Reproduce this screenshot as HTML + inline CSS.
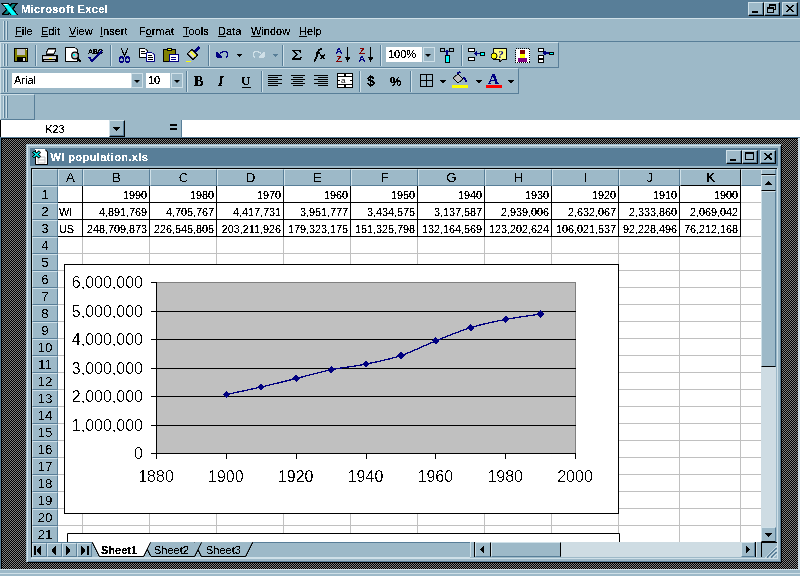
<!DOCTYPE html>
<html><head><meta charset="utf-8">
<style>
*{margin:0;padding:0;box-sizing:border-box}
html,body{width:800px;height:576px;overflow:hidden;background:#9db9c8;font-family:"Liberation Sans",sans-serif;font-size:11px;color:#000;line-height:1}
.a{position:absolute}
.hl{background:#cfe0e8}
.sh{background:#587e98}
.tb{position:absolute;border-top:1px solid #cfe0e8;border-left:1px solid #cfe0e8;border-right:1px solid #587e98;border-bottom:1px solid #587e98}
.grip{position:absolute;width:2px;border-left:1px solid #cfe0e8;border-right:1px solid #587e98}
.sep{position:absolute;width:2px;border-left:1px solid #587e98;border-right:1px solid #cfe0e8}
.btn{position:absolute;background:#9db9c8;border-top:1px solid #cfe0e8;border-left:1px solid #cfe0e8;border-right:1px solid #000;border-bottom:1px solid #000;box-shadow:inset -1px -1px 0 #587e98}
.menu{position:absolute;top:26px;font-size:11px}
.menu u{text-decoration:underline;text-underline-offset:1px}
.ttl{position:absolute;color:#fff;font-weight:bold;font-size:11px;letter-spacing:0.4px}
.hdr{position:absolute;background:#9db9c8;border-top:1px solid #cfe0e8;border-left:1px solid #cfe0e8;border-right:1px solid #587e98;border-bottom:1px solid #587e98;text-align:center;font-size:13.33px;line-height:15px}
.cell{position:absolute;font-size:10.8px;text-align:right;line-height:16px}
.ax{position:absolute;font-size:16px;line-height:1}
.th{filter:url(#t1)}
.th2{filter:url(#t2)}
.th3{filter:url(#t3)}
.ht{position:absolute;text-align:center;font-size:13.33px;line-height:15px}
</style></head><body>
<svg width="0" height="0" style="position:absolute"><filter id="t1"><feComponentTransfer><feFuncA type="discrete" tableValues="0 0 1 1 1"/></feComponentTransfer></filter><filter id="t3"><feComponentTransfer><feFuncA type="discrete" tableValues="0 1"/></feComponentTransfer></filter><filter id="t2"><feComponentTransfer><feFuncA type="discrete" tableValues="0 0 0 1 1"/></feComponentTransfer></filter></svg>
<!-- app title bar -->
<div class="a" style="left:0;top:0;width:800px;height:18px;background:#587e98"></div>
<div class="ttl th" style="left:21px;top:4px">Microsoft Excel</div>
<div class="btn" style="left:748px;top:2px;width:16px;height:14px"></div>
<div class="btn" style="left:764px;top:2px;width:16px;height:14px"></div>
<div class="btn" style="left:782px;top:2px;width:16px;height:14px"></div>
<div class="a hl" style="left:0;top:18px;width:800px;height:1px"></div>
<!-- menu bar -->
<div class="grip" style="left:3px;top:21px;height:19px"></div>
<div class="grip" style="left:6px;top:21px;height:19px"></div>
<div class="menu th" style="left:15px"><u>F</u>ile</div>
<div class="menu th" style="left:41px"><u>E</u>dit</div>
<div class="menu th" style="left:69px"><u>V</u>iew</div>
<div class="menu th" style="left:100px"><u>I</u>nsert</div>
<div class="menu th" style="left:139px">F<u>o</u>rmat</div>
<div class="menu th" style="left:183px"><u>T</u>ools</div>
<div class="menu th" style="left:218px"><u>D</u>ata</div>
<div class="menu th" style="left:251px"><u>W</u>indow</div>
<div class="menu th" style="left:299px"><u>H</u>elp</div>
<div class="a sh" style="left:0;top:41px;width:800px;height:1px"></div>
<!-- toolbars -->
<div class="tb" style="left:0;top:42px;width:559px;height:26px"></div>
<div class="grip" style="left:3px;top:44px;height:22px"></div>
<div class="grip" style="left:6px;top:44px;height:22px"></div>
<div class="tb" style="left:0;top:68px;width:519px;height:26px"></div>
<div class="grip" style="left:3px;top:70px;height:22px"></div>
<div class="grip" style="left:6px;top:70px;height:22px"></div>
<div class="tb" style="left:0;top:94px;width:35px;height:26px"></div>
<div class="grip" style="left:3px;top:96px;height:22px"></div>
<div class="grip" style="left:6px;top:96px;height:22px"></div>
<!-- formula bar -->
<div class="a" style="left:0;top:120px;width:109px;height:17px;background:#fff;border-left:1px solid #000"></div>
<div class="a th" style="left:45.5px;top:124px;font-size:10.67px">K23</div>
<div class="btn" style="left:109px;top:120px;width:16px;height:17px"></div>
<div class="a" style="left:170px;top:124px;width:7px;height:2px;background:#000"></div>
<div class="a" style="left:170px;top:128px;width:7px;height:2px;background:#000"></div>
<div class="a" style="left:181px;top:120px;width:619px;height:17px;background:#fff;border-left:1px solid #587e98"></div>
<div class="a sh" style="left:0;top:137px;width:800px;height:1px"></div>
<!-- MDI -->
<svg class="a" style="left:1px;top:138px" width="797" height="431"><defs><pattern id="chk" x="0" y="0" width="2" height="2" patternUnits="userSpaceOnUse"><rect width="2" height="2" fill="#000"/><rect x="1" y="0" width="1" height="1" fill="#808080"/><rect x="0" y="1" width="1" height="1" fill="#808080"/></pattern></defs><rect width="797" height="431" fill="url(#chk)" shape-rendering="crispEdges"/></svg>
<div class="a sh" style="left:0;top:138px;width:1px;height:431px"></div>
<div class="a" style="left:1px;top:138px;width:797px;height:1px;background:#000"></div>
<div class="a" style="left:1px;top:138px;width:1px;height:431px;background:#000"></div>
<div class="a hl" style="left:798px;top:138px;width:2px;height:431px"></div>
<!-- status bar area -->
<div class="a" style="left:0;top:569px;width:800px;height:7px;background:#9db9c8;border-top:1px solid #cfe0e8"></div>
<div class="a hl" style="left:0;top:573px;width:800px;height:1px"></div>
<!-- document window -->
<div class="a" style="left:26px;top:144px;width:756px;height:419px;background:#9db9c8;border-top:1px solid #9db9c8;border-left:1px solid #9db9c8;border-right:1px solid #000;border-bottom:1px solid #000;box-shadow:inset 1px 1px 0 #cfe0e8,inset -1px -1px 0 #587e98"></div>
<div class="a" style="left:30px;top:148px;width:748px;height:18px;background:#587e98"></div>
<div class="ttl th" style="left:50.5px;top:152px">WI population.xls</div>
<div class="btn" style="left:726px;top:150px;width:16px;height:14px"></div>
<div class="btn" style="left:742px;top:150px;width:16px;height:14px"></div>
<div class="btn" style="left:760px;top:150px;width:16px;height:14px"></div>

<svg class="a th" style="left:0;top:0" width="800" height="140" shape-rendering="crispEdges">
<!-- app icon -->
<g shape-rendering="auto">
<path d="M2.5 3.5 H8 L17 14.5 H11.5 Z" fill="#00ffff" stroke="#000" stroke-width="1.6"/>
<path d="M12 3.5 H17 L8 14.5 H2.5 Z" fill="#008080" stroke="#000" stroke-width="1.2"/>
<path d="M3 4 H8 L17 15 H11.5 Z" fill="#00ffff"/>
<path d="M3.5 4.5 H7.5" stroke="#fff" stroke-width="1"/>
</g>
<!-- title buttons glyphs -->
<rect x="752" y="11" width="6" height="2" fill="#000"/>
<rect x="769.5" y="4.5" width="6" height="5" fill="none" stroke="#000" stroke-width="1"/>
<rect x="769" y="4" width="7" height="2" fill="#000"/>
<rect x="767" y="7" width="7" height="6" fill="#9db9c8"/>
<rect x="767.5" y="7.5" width="6" height="5" fill="none" stroke="#000"/>
<rect x="767" y="7" width="7" height="2" fill="#000"/>
<path d="M786 5 L794 12 M794 5 L786 12" stroke="#000" stroke-width="1.6" shape-rendering="auto"/>
<!-- save -->
<rect x="14" y="48" width="14" height="14" fill="#000"/>
<rect x="15" y="49" width="12" height="12" fill="#808000"/>
<rect x="17" y="49" width="8" height="6" fill="#c0c0c0"/>
<rect x="16" y="55" width="10" height="0" fill="#808000"/>
<rect x="17" y="57" width="9" height="5" fill="#000"/>
<rect x="23" y="58" width="2" height="3" fill="#e0e0e0"/>
<rect x="26" y="49" width="1" height="1" fill="#fff"/>
<!-- sep -->
<rect x="35" y="45" width="1" height="21" fill="#587e98"/><rect x="36" y="45" width="1" height="21" fill="#cfe0e8"/>
<!-- print -->
<path d="M48 49 H56 L54 54 H46 Z" fill="#fff" stroke="#000" shape-rendering="auto"/>
<rect x="42" y="55" width="16" height="7" fill="#000"/>
<rect x="43" y="56" width="13" height="1" fill="#c0c0c0"/>
<rect x="43" y="57" width="13" height="2" fill="#d8d8d8"/>
<rect x="49" y="58" width="3" height="1" fill="#ffff00"/>
<rect x="44" y="60" width="11" height="1" fill="#c0c0c0"/>
<!-- preview -->
<path d="M65.5 47.5 H75 L77.5 50 V61.5 H65.5 Z" fill="#fff" stroke="#000" shape-rendering="auto"/>
<circle cx="75" cy="55.5" r="3.3" fill="#c0c0c0" stroke="#000" stroke-width="1.2" shape-rendering="auto"/>
<rect x="73" y="54" width="2" height="2" fill="#00ffff"/>
<path d="M77 58 L80.5 61.5" stroke="#000" stroke-width="2" shape-rendering="auto"/>
<!-- spelling -->
<text x="88" y="54" font-family="Liberation Sans" font-size="7" font-weight="bold" shape-rendering="auto">ABC</text>
<path d="M89 57 L92 61 L102 51" fill="none" stroke="#000080" stroke-width="2" shape-rendering="auto"/>
<!-- sep -->
<rect x="110" y="45" width="1" height="21" fill="#587e98"/><rect x="111" y="45" width="1" height="21" fill="#cfe0e8"/>
<!-- cut -->
<g shape-rendering="auto">
<path d="M121 48 L125 57 M128 48 L124 57" stroke="#000" stroke-width="1"/>
<ellipse cx="121.5" cy="59.5" rx="2" ry="2.5" fill="none" stroke="#000080" stroke-width="1.3"/>
<ellipse cx="127.5" cy="59.5" rx="2" ry="2.5" fill="none" stroke="#000080" stroke-width="1.3"/>
</g>
<!-- copy -->
<path d="M139.5 48.5 H145 L147.5 51 V57.5 H139.5 Z" fill="#fff" stroke="#000" shape-rendering="auto"/>
<rect x="141" y="51" width="4" height="1" fill="#000"/><rect x="141" y="53" width="5" height="1" fill="#000"/>
<path d="M146.5 52.5 H152 L154.5 55 V61.5 H146.5 Z" fill="#fff" stroke="#000080" shape-rendering="auto"/>
<rect x="148" y="55" width="4" height="1" fill="#000"/><rect x="148" y="57" width="5" height="1" fill="#000"/><rect x="148" y="59" width="5" height="1" fill="#000"/>
<!-- paste -->
<rect x="163" y="49" width="13" height="13" fill="#000"/>
<rect x="164" y="50" width="11" height="11" fill="#808000"/>
<rect x="167" y="48" width="5" height="3" fill="#000"/><rect x="168" y="49" width="3" height="1" fill="#ffff00"/>
<rect x="169" y="54" width="10" height="8" fill="#000080"/>
<rect x="170" y="55" width="8" height="6" fill="#fff"/>
<rect x="171" y="57" width="5" height="1" fill="#000080"/><rect x="171" y="59" width="5" height="1" fill="#000080"/>
<!-- format painter -->
<g shape-rendering="auto">
<path d="M186.5 53.5 L192 49 L198 55 L193 60 Z" fill="#000"/>
<path d="M188 53.5 L192 50.5 L196.5 55 L193 58.5 Z" fill="#d8d8d8"/>
<path d="M190.5 51.5 L195.5 56.5" stroke="#ffff00" stroke-width="1.4"/>
<path d="M195 51 L199.5 47" stroke="#000080" stroke-width="2.6"/>
<path d="M186 61.5 H191 L192 60.5" stroke="#ffff00" stroke-width="1" fill="none"/>
</g>
<!-- sep -->
<rect x="208" y="45" width="1" height="21" fill="#587e98"/><rect x="209" y="45" width="1" height="21" fill="#cfe0e8"/>
<!-- undo -->
<g shape-rendering="auto">
<path d="M220 53.5 Q223.5 50.5 226 51.5 Q229 53 226.5 57.5" fill="none" stroke="#000080" stroke-width="1.2"/>
<path d="M216.5 51.5 V57.5 H222.5 Z" fill="#000080"/>
<path d="M237 54 H242 L239.5 57 Z" fill="#000"/>
<path d="M261 53.5 Q257.5 50.5 255 51.5 Q252 53 254.5 57.5" fill="none" stroke="#cfe0e8" stroke-width="1.2"/>
<path d="M264.5 51.5 V57.5 H258.5 Z" fill="#cfe0e8"/>
<path d="M273 54 H278 L275.5 57 Z" fill="#587e98"/>
</g>
<!-- sep -->
<rect x="282" y="45" width="1" height="21" fill="#587e98"/><rect x="283" y="45" width="1" height="21" fill="#cfe0e8"/>
<!-- sigma -->
<path d="M292 50 H301 V52.5 H300.2 L299.2 51.2 H294.6 L297.8 54.6 L294.2 58.2 H299.6 L300.6 56.8 H301.4 V59.6 H292 V58.6 L296.2 54.6 L292 50.6 Z" fill="#000" shape-rendering="auto"/>
<!-- fx -->
<path d="M314 61 Q316 60 317 55 L318.5 50.5 Q319.5 48.8 322 49.2" fill="none" stroke="#000" stroke-width="1.6" shape-rendering="auto"/>
<path d="M315.5 53 H320" stroke="#000" stroke-width="1.2" shape-rendering="auto"/>
<path d="M320 54.5 L325 59 M325 54.5 L320 59" stroke="#000" stroke-width="1.4" shape-rendering="auto"/>
<!-- sort asc -->
<text x="335.5" y="53.8" font-family="Liberation Sans" font-size="9.5" font-weight="bold" fill="#000080" shape-rendering="auto">A</text>
<text x="336" y="62" font-family="Liberation Sans" font-size="9.5" font-weight="bold" fill="#800000" shape-rendering="auto">Z</text>
<rect x="347" y="47" width="1" height="12" fill="#000"/><path d="M345 57 H350.2 L347.6 62 Z" fill="#000" shape-rendering="auto"/>
<!-- sort desc -->
<text x="359" y="53.8" font-family="Liberation Sans" font-size="9.5" font-weight="bold" fill="#800000" shape-rendering="auto">Z</text>
<text x="358.5" y="62" font-family="Liberation Sans" font-size="9.5" font-weight="bold" fill="#000080" shape-rendering="auto">A</text>
<rect x="370" y="47" width="1" height="12" fill="#000"/><path d="M368 57 H373.2 L370.6 62 Z" fill="#000" shape-rendering="auto"/>
<!-- sep -->
<rect x="380" y="45" width="1" height="21" fill="#587e98"/><rect x="381" y="45" width="1" height="21" fill="#cfe0e8"/>
<!-- zoom box -->
<rect x="386" y="47" width="36" height="15" fill="#fff"/>
<rect x="423" y="47" width="12" height="15" fill="#cfe0e8"/>
<rect x="424" y="48" width="10" height="13" fill="#9db9c8"/>
<path d="M425 54 H431 L428 57 Z" fill="#000" shape-rendering="auto"/>
<!-- drawing -->
<rect x="440" y="48" width="4" height="3" fill="none" stroke="#000" stroke-width="1"/>
<rect x="449" y="48" width="4" height="3" fill="none" stroke="#000" stroke-width="1"/>
<rect x="445" y="55" width="4" height="7" fill="#00ffff" stroke="#000"/>
<path d="M447 50 V55 M445 52 L447 50 L449 52" stroke="#000080" stroke-width="1.2" fill="none" shape-rendering="auto"/>
<!-- sep -->
<rect x="461" y="45" width="1" height="21" fill="#587e98"/><rect x="462" y="45" width="1" height="21" fill="#cfe0e8"/>
<!-- icon 1 -->
<rect x="468" y="48" width="6" height="3" fill="#fff" stroke="#000"/>
<rect x="468" y="57" width="6" height="3" fill="#fff" stroke="#000"/>
<rect x="480" y="52" width="4" height="3" fill="#00ffff" stroke="#000"/>
<path d="M475 53.5 H480 M477 51.5 L475 53.5 L477 55.5" stroke="#000080" stroke-width="1.3" fill="none" shape-rendering="auto"/>
<!-- help -->
<path d="M493.5 48.5 H506.5 V59.5 H502 L500 62 V59.5 H494 Z" fill="#fff" stroke="#000" shape-rendering="auto"/>
<rect x="494" y="49" width="12" height="10" fill="#ffff80"/>
<text x="498" y="58" font-family="Liberation Serif" font-size="11" font-weight="bold" font-style="italic" fill="#000080" shape-rendering="auto">?</text>
<circle cx="494" cy="56" r="3" fill="#ffff00" stroke="#000" shape-rendering="auto"/>
<!-- assistant -->
<rect x="515.5" y="48.5" width="14" height="14" fill="#fff" stroke="#000" stroke-dasharray="1 1"/>
<rect x="520" y="50" width="5" height="4" fill="#800000"/>
<rect x="520" y="54" width="5" height="4" fill="#ffff00"/>
<rect x="518" y="58" width="9" height="4" fill="#800080"/>
<!-- icon 4 -->
<rect x="538" y="48" width="5" height="3" fill="#fff" stroke="#000"/>
<rect x="538" y="55" width="5" height="3" fill="#fff" stroke="#000"/>
<rect x="538" y="59" width="5" height="3" fill="#fff" stroke="#000"/>
<rect x="549" y="52" width="4" height="2" fill="#00ffff" stroke="#000"/>
<path d="M544 53 H549 M546 51 L544 53 L546 55" stroke="#000080" stroke-width="1.3" fill="none" shape-rendering="auto"/>

<!-- ===== formatting toolbar ===== -->
<rect x="12" y="73" width="119" height="15" fill="#fff"/>
<rect x="131" y="73" width="12" height="15" fill="#cfe0e8"/>
<rect x="132" y="74" width="10" height="13" fill="#9db9c8"/>
<path d="M134 80 H140 L137 83 Z" fill="#000" shape-rendering="auto"/>
<rect x="146" y="73" width="24" height="15" fill="#fff"/>
<rect x="171" y="73" width="12" height="15" fill="#cfe0e8"/>
<rect x="172" y="74" width="10" height="13" fill="#9db9c8"/>
<path d="M174 80 H180 L177 83 Z" fill="#000" shape-rendering="auto"/>
<rect x="186" y="71" width="1" height="21" fill="#587e98"/><rect x="187" y="71" width="1" height="21" fill="#cfe0e8"/>
<text x="194" y="86" font-family="Liberation Serif" font-size="14" font-weight="bold" shape-rendering="auto">B</text>
<text x="218" y="86" font-family="Liberation Serif" font-size="14" font-weight="bold" font-style="italic" shape-rendering="auto">I</text>
<text x="241" y="85" font-family="Liberation Serif" font-size="13" font-weight="bold" shape-rendering="auto">U</text>
<rect x="242" y="87" width="9" height="1" fill="#000"/>
<rect x="261" y="71" width="1" height="21" fill="#587e98"/><rect x="262" y="71" width="1" height="21" fill="#cfe0e8"/>
<!-- align -->
<rect x="268" y="75" width="14" height="1" fill="#000"/><rect x="268" y="77" width="10" height="1" fill="#000"/><rect x="268" y="79" width="14" height="1" fill="#000"/><rect x="268" y="81" width="10" height="1" fill="#000"/><rect x="268" y="83" width="14" height="1" fill="#000"/><rect x="268" y="85" width="10" height="1" fill="#000"/>
<rect x="291" y="75" width="14" height="1" fill="#000"/><rect x="293" y="77" width="10" height="1" fill="#000"/><rect x="291" y="79" width="14" height="1" fill="#000"/><rect x="293" y="81" width="10" height="1" fill="#000"/><rect x="291" y="83" width="14" height="1" fill="#000"/><rect x="293" y="85" width="10" height="1" fill="#000"/>
<rect x="314" y="75" width="14" height="1" fill="#000"/><rect x="318" y="77" width="10" height="1" fill="#000"/><rect x="314" y="79" width="14" height="1" fill="#000"/><rect x="318" y="81" width="10" height="1" fill="#000"/><rect x="314" y="83" width="14" height="1" fill="#000"/><rect x="318" y="85" width="10" height="1" fill="#000"/>
<!-- merge -->
<rect x="337" y="73" width="16" height="15" fill="#000"/>
<rect x="338" y="74" width="6" height="2" fill="#fff"/><rect x="346" y="74" width="6" height="2" fill="#fff"/>
<rect x="338" y="77" width="14" height="7" fill="#fff"/>
<rect x="338" y="85" width="6" height="2" fill="#fff"/><rect x="346" y="85" width="6" height="2" fill="#fff"/>
<text x="341" y="83" font-family="Liberation Sans" font-size="8" shape-rendering="auto">a</text>
<rect x="338" y="80" width="2" height="1" fill="#000"/><rect x="350" y="80" width="2" height="1" fill="#000"/>
<rect x="359" y="71" width="1" height="21" fill="#587e98"/><rect x="360" y="71" width="1" height="21" fill="#cfe0e8"/>
<text x="367" y="86" font-family="Liberation Sans" font-size="14" font-weight="bold" shape-rendering="auto">$</text>
<text x="390" y="86" font-family="Liberation Sans" font-size="13" font-weight="bold" shape-rendering="auto">%</text>
<rect x="410" y="71" width="1" height="21" fill="#587e98"/><rect x="411" y="71" width="1" height="21" fill="#cfe0e8"/>
<!-- borders -->
<rect x="420.5" y="74.5" width="12" height="12" fill="none" stroke="#000"/>
<rect x="426" y="75" width="1" height="11" fill="#000"/><rect x="421" y="80" width="11" height="1" fill="#000"/>
<path d="M440 80 H446 L443 83 Z" fill="#000" shape-rendering="auto"/>
<!-- fill color -->
<g shape-rendering="auto">
<path d="M453 78 L458 74 L463 79 L458 83 Z" fill="#c0c0c0" stroke="#000"/>
<path d="M457 74 Q459 71 461 73 M463 78 Q466 78 466 82" stroke="#000080" stroke-width="1.6" fill="none"/>
</g>
<rect x="452" y="85" width="16" height="3" fill="#ffff00"/>
<path d="M476 80 H482 L479 83 Z" fill="#000" shape-rendering="auto"/>
<!-- font color -->
<text x="488" y="84" font-family="Liberation Serif" font-size="15" font-weight="bold" fill="#000080" shape-rendering="auto">A</text>
<rect x="486" y="85" width="16" height="3" fill="#ff0000"/>
<path d="M508 80 H514 L511 83 Z" fill="#000" shape-rendering="auto"/>
<!-- formula dropdown arrow -->
<path d="M113 127 H120 L116.5 131 Z" fill="#000" shape-rendering="auto"/>
</svg>
<div class="a th" style="left:14px;top:75px;font-size:11px">Arial</div>
<div class="a th" style="left:148px;top:75px;font-size:11px">10</div>
<div class="a th" style="left:388px;top:49px;font-size:11px">100%</div>

<div class="a" style="left:31px;top:168px;width:730px;height:374px;background:#fff;border-top:1px solid #000;border-left:1px solid #000"></div>
<div class="a" style="left:32px;top:169px;width:729px;height:17px;background:#9db9c8"></div>
<div class="a" style="left:32px;top:169px;width:26px;height:373px;background:#9db9c8"></div>
<div class="hdr" style="left:32px;top:169px;width:26px;height:17px"></div>
<div class="hdr" style="left:58px;top:169px;width:25px;height:17px;"></div>
<div class="hdr" style="left:83px;top:169px;width:67px;height:17px;"></div>
<div class="hdr" style="left:150px;top:169px;width:67px;height:17px;"></div>
<div class="hdr" style="left:217px;top:169px;width:67px;height:17px;"></div>
<div class="hdr" style="left:284px;top:169px;width:67px;height:17px;"></div>
<div class="hdr" style="left:351px;top:169px;width:67px;height:17px;"></div>
<div class="hdr" style="left:418px;top:169px;width:67px;height:17px;"></div>
<div class="hdr" style="left:485px;top:169px;width:67px;height:17px;"></div>
<div class="hdr" style="left:552px;top:169px;width:67px;height:17px;"></div>
<div class="hdr" style="left:619px;top:169px;width:61px;height:17px;"></div>
<div class="hdr" style="left:680px;top:169px;width:61px;height:17px;font-weight:bold;border-right-color:#000;border-bottom-color:#000;"></div>
<div class="hdr" style="left:741px;top:169px;width:30px;height:17px;border-right:none"></div>
<div class="hdr" style="left:32px;top:186px;width:26px;height:17px;"></div>
<div class="hdr" style="left:32px;top:203px;width:26px;height:17px;"></div>
<div class="hdr" style="left:32px;top:220px;width:26px;height:17px;"></div>
<div class="hdr" style="left:32px;top:237px;width:26px;height:17px;"></div>
<div class="hdr" style="left:32px;top:254px;width:26px;height:17px;"></div>
<div class="hdr" style="left:32px;top:271px;width:26px;height:17px;"></div>
<div class="hdr" style="left:32px;top:288px;width:26px;height:17px;"></div>
<div class="hdr" style="left:32px;top:305px;width:26px;height:17px;"></div>
<div class="hdr" style="left:32px;top:322px;width:26px;height:17px;"></div>
<div class="hdr" style="left:32px;top:339px;width:26px;height:17px;"></div>
<div class="hdr" style="left:32px;top:356px;width:26px;height:17px;"></div>
<div class="hdr" style="left:32px;top:373px;width:26px;height:17px;"></div>
<div class="hdr" style="left:32px;top:390px;width:26px;height:17px;"></div>
<div class="hdr" style="left:32px;top:407px;width:26px;height:17px;"></div>
<div class="hdr" style="left:32px;top:424px;width:26px;height:17px;"></div>
<div class="hdr" style="left:32px;top:441px;width:26px;height:17px;"></div>
<div class="hdr" style="left:32px;top:458px;width:26px;height:17px;"></div>
<div class="hdr" style="left:32px;top:475px;width:26px;height:17px;"></div>
<div class="hdr" style="left:32px;top:492px;width:26px;height:17px;"></div>
<div class="hdr" style="left:32px;top:509px;width:26px;height:17px;"></div>
<div class="hdr" style="left:32px;top:526px;width:26px;height:16px;border-bottom:none;"></div>
<div class="ht th3" style="left:58px;top:170px;width:25px;">A</div><div class="ht th3" style="left:83px;top:170px;width:67px;">B</div><div class="ht th3" style="left:150px;top:170px;width:67px;">C</div><div class="ht th3" style="left:217px;top:170px;width:67px;">D</div><div class="ht th3" style="left:284px;top:170px;width:67px;">E</div><div class="ht th3" style="left:351px;top:170px;width:67px;">F</div><div class="ht th3" style="left:418px;top:170px;width:67px;">G</div><div class="ht th3" style="left:485px;top:170px;width:67px;">H</div><div class="ht th3" style="left:552px;top:170px;width:67px;">I</div><div class="ht th3" style="left:619px;top:170px;width:61px;">J</div><div class="ht th3" style="left:680px;top:170px;width:61px;font-weight:bold;">K</div><div class="ht th3" style="left:32px;top:187px;width:26px;height:16px;overflow:hidden">1</div><div class="ht th3" style="left:32px;top:204px;width:26px;height:16px;overflow:hidden">2</div><div class="ht th3" style="left:32px;top:221px;width:26px;height:16px;overflow:hidden">3</div><div class="ht th3" style="left:32px;top:238px;width:26px;height:16px;overflow:hidden">4</div><div class="ht th3" style="left:32px;top:255px;width:26px;height:16px;overflow:hidden">5</div><div class="ht th3" style="left:32px;top:272px;width:26px;height:16px;overflow:hidden">6</div><div class="ht th3" style="left:32px;top:289px;width:26px;height:16px;overflow:hidden">7</div><div class="ht th3" style="left:32px;top:306px;width:26px;height:16px;overflow:hidden">8</div><div class="ht th3" style="left:32px;top:323px;width:26px;height:16px;overflow:hidden">9</div><div class="ht th3" style="left:32px;top:340px;width:26px;height:16px;overflow:hidden">10</div><div class="ht th3" style="left:32px;top:357px;width:26px;height:16px;overflow:hidden">11</div><div class="ht th3" style="left:32px;top:374px;width:26px;height:16px;overflow:hidden">12</div><div class="ht th3" style="left:32px;top:391px;width:26px;height:16px;overflow:hidden">13</div><div class="ht th3" style="left:32px;top:408px;width:26px;height:16px;overflow:hidden">14</div><div class="ht th3" style="left:32px;top:425px;width:26px;height:16px;overflow:hidden">15</div><div class="ht th3" style="left:32px;top:442px;width:26px;height:16px;overflow:hidden">16</div><div class="ht th3" style="left:32px;top:459px;width:26px;height:16px;overflow:hidden">17</div><div class="ht th3" style="left:32px;top:476px;width:26px;height:16px;overflow:hidden">18</div><div class="ht th3" style="left:32px;top:493px;width:26px;height:16px;overflow:hidden">19</div><div class="ht th3" style="left:32px;top:510px;width:26px;height:16px;overflow:hidden">20</div><div class="ht th3" style="left:32px;top:527px;width:26px;height:15px;overflow:hidden">21</div>
<svg class="a" style="left:0;top:0" width="800" height="576" shape-rendering="crispEdges"><rect x="82" y="186" width="1" height="356" fill="#c0c0c0"/><rect x="149" y="186" width="1" height="356" fill="#c0c0c0"/><rect x="216" y="186" width="1" height="356" fill="#c0c0c0"/><rect x="283" y="186" width="1" height="356" fill="#c0c0c0"/><rect x="350" y="186" width="1" height="356" fill="#c0c0c0"/><rect x="417" y="186" width="1" height="356" fill="#c0c0c0"/><rect x="484" y="186" width="1" height="356" fill="#c0c0c0"/><rect x="551" y="186" width="1" height="356" fill="#c0c0c0"/><rect x="618" y="186" width="1" height="356" fill="#c0c0c0"/><rect x="679" y="186" width="1" height="356" fill="#c0c0c0"/><rect x="740" y="186" width="1" height="356" fill="#c0c0c0"/><rect x="58" y="202" width="703" height="1" fill="#c0c0c0"/><rect x="58" y="219" width="703" height="1" fill="#c0c0c0"/><rect x="58" y="236" width="703" height="1" fill="#c0c0c0"/><rect x="58" y="253" width="703" height="1" fill="#c0c0c0"/><rect x="58" y="270" width="703" height="1" fill="#c0c0c0"/><rect x="58" y="287" width="703" height="1" fill="#c0c0c0"/><rect x="58" y="304" width="703" height="1" fill="#c0c0c0"/><rect x="58" y="321" width="703" height="1" fill="#c0c0c0"/><rect x="58" y="338" width="703" height="1" fill="#c0c0c0"/><rect x="58" y="355" width="703" height="1" fill="#c0c0c0"/><rect x="58" y="372" width="703" height="1" fill="#c0c0c0"/><rect x="58" y="389" width="703" height="1" fill="#c0c0c0"/><rect x="58" y="406" width="703" height="1" fill="#c0c0c0"/><rect x="58" y="423" width="703" height="1" fill="#c0c0c0"/><rect x="58" y="440" width="703" height="1" fill="#c0c0c0"/><rect x="58" y="457" width="703" height="1" fill="#c0c0c0"/><rect x="58" y="474" width="703" height="1" fill="#c0c0c0"/><rect x="58" y="491" width="703" height="1" fill="#c0c0c0"/><rect x="58" y="508" width="703" height="1" fill="#c0c0c0"/><rect x="58" y="525" width="703" height="1" fill="#c0c0c0"/><rect x="82" y="186" width="1" height="51" fill="#000"/><rect x="149" y="186" width="1" height="51" fill="#000"/><rect x="216" y="186" width="1" height="51" fill="#000"/><rect x="283" y="186" width="1" height="51" fill="#000"/><rect x="350" y="186" width="1" height="51" fill="#000"/><rect x="417" y="186" width="1" height="51" fill="#000"/><rect x="484" y="186" width="1" height="51" fill="#000"/><rect x="551" y="186" width="1" height="51" fill="#000"/><rect x="618" y="186" width="1" height="51" fill="#000"/><rect x="679" y="186" width="1" height="51" fill="#000"/><rect x="740" y="186" width="1" height="51" fill="#000"/><rect x="58" y="202" width="683" height="1" fill="#000"/><rect x="58" y="219" width="683" height="1" fill="#000"/><rect x="58" y="236" width="683" height="1" fill="#000"/></svg>
<div class="cell th" style="left:69px;top:187px;width:78px">1990</div>
<div class="cell th" style="left:69px;top:204px;width:78px">4,891,769</div>
<div class="cell th" style="left:69px;top:221px;width:78px">248,709,873</div>
<div class="cell th" style="left:136px;top:187px;width:78px">1980</div>
<div class="cell th" style="left:136px;top:204px;width:78px">4,705,767</div>
<div class="cell th" style="left:136px;top:221px;width:78px">226,545,805</div>
<div class="cell th" style="left:203px;top:187px;width:78px">1970</div>
<div class="cell th" style="left:203px;top:204px;width:78px">4,417,731</div>
<div class="cell th" style="left:203px;top:221px;width:78px">203,211,926</div>
<div class="cell th" style="left:270px;top:187px;width:78px">1960</div>
<div class="cell th" style="left:270px;top:204px;width:78px">3,951,777</div>
<div class="cell th" style="left:270px;top:221px;width:78px">179,323,175</div>
<div class="cell th" style="left:337px;top:187px;width:78px">1950</div>
<div class="cell th" style="left:337px;top:204px;width:78px">3,434,575</div>
<div class="cell th" style="left:337px;top:221px;width:78px">151,325,798</div>
<div class="cell th" style="left:404px;top:187px;width:78px">1940</div>
<div class="cell th" style="left:404px;top:204px;width:78px">3,137,587</div>
<div class="cell th" style="left:404px;top:221px;width:78px">132,164,569</div>
<div class="cell th" style="left:471px;top:187px;width:78px">1930</div>
<div class="cell th" style="left:471px;top:204px;width:78px">2,939,006</div>
<div class="cell th" style="left:471px;top:221px;width:78px">123,202,624</div>
<div class="cell th" style="left:538px;top:187px;width:78px">1920</div>
<div class="cell th" style="left:538px;top:204px;width:78px">2,632,067</div>
<div class="cell th" style="left:538px;top:221px;width:78px">106,021,537</div>
<div class="cell th" style="left:599px;top:187px;width:78px">1910</div>
<div class="cell th" style="left:599px;top:204px;width:78px">2,333,860</div>
<div class="cell th" style="left:599px;top:221px;width:78px">92,228,496</div>
<div class="cell th" style="left:660px;top:187px;width:78px">1900</div>
<div class="cell th" style="left:660px;top:204px;width:78px">2,069,042</div>
<div class="cell th" style="left:660px;top:221px;width:78px">76,212,168</div>
<div class="cell th" style="left:59px;top:204px;text-align:left">WI</div>
<div class="cell th" style="left:59px;top:221px;text-align:left">US</div>
<svg class="a" style="left:0;top:0" width="800" height="576"><rect x="64.5" y="264.5" width="554" height="249" fill="#fff" stroke="#000" stroke-width="1"/><path d="M67.5 542 V533.5 H619.5 V542" fill="#fff" stroke="#000" stroke-width="1"/><rect x="156" y="282" width="419" height="171" fill="#c0c0c0"/><rect x="156" y="282" width="420" height="1" fill="#808080"/><rect x="575" y="282" width="1" height="171" fill="#808080"/><rect x="151" y="453" width="5" height="1" fill="#000"/><rect x="156" y="425" width="420" height="1" fill="#000"/><rect x="151" y="425" width="5" height="1" fill="#000"/><rect x="156" y="396" width="420" height="1" fill="#000"/><rect x="151" y="396" width="5" height="1" fill="#000"/><rect x="156" y="368" width="420" height="1" fill="#000"/><rect x="151" y="368" width="5" height="1" fill="#000"/><rect x="156" y="339" width="420" height="1" fill="#000"/><rect x="151" y="339" width="5" height="1" fill="#000"/><rect x="156" y="311" width="420" height="1" fill="#000"/><rect x="151" y="311" width="5" height="1" fill="#000"/><rect x="151" y="282" width="5" height="1" fill="#000"/><rect x="156" y="282" width="1" height="172" fill="#000"/><rect x="156" y="453" width="420" height="1" fill="#000"/><rect x="156" y="453" width="1" height="6" fill="#000"/><rect x="226" y="453" width="1" height="6" fill="#000"/><rect x="296" y="453" width="1" height="6" fill="#000"/><rect x="366" y="453" width="1" height="6" fill="#000"/><rect x="435" y="453" width="1" height="6" fill="#000"/><rect x="505" y="453" width="1" height="6" fill="#000"/><rect x="575" y="453" width="1" height="6" fill="#000"/><path d="M226.33 394.53 C232.15 393.27 249.61 389.66 261.25 386.98 C272.89 384.31 284.53 381.36 296.17 378.49 C307.81 375.61 319.44 372.14 331.08 369.74 C342.72 367.34 354.36 366.43 366.00 364.08 C377.64 361.72 389.28 359.48 400.92 355.61 C412.56 351.75 424.19 345.54 435.83 340.87 C447.47 336.20 459.11 331.18 470.75 327.59 C482.39 324.01 494.03 321.64 505.67 319.39 C517.31 317.13 534.76 314.97 540.58 314.08" fill="none" stroke="#000080" stroke-width="1.3" shape-rendering="crispEdges"/><path d="M226.3 390.8 L230.0 394.5 L226.3 398.2 L222.6 394.5Z" fill="#000080" shape-rendering="crispEdges"/><path d="M261.2 383.3 L264.9 387.0 L261.2 390.7 L257.6 387.0Z" fill="#000080" shape-rendering="crispEdges"/><path d="M296.2 374.8 L299.9 378.5 L296.2 382.2 L292.5 378.5Z" fill="#000080" shape-rendering="crispEdges"/><path d="M331.1 366.0 L334.8 369.7 L331.1 373.4 L327.4 369.7Z" fill="#000080" shape-rendering="crispEdges"/><path d="M366.0 360.4 L369.7 364.1 L366.0 367.8 L362.3 364.1Z" fill="#000080" shape-rendering="crispEdges"/><path d="M400.9 351.9 L404.6 355.6 L400.9 359.3 L397.2 355.6Z" fill="#000080" shape-rendering="crispEdges"/><path d="M435.8 337.2 L439.5 340.9 L435.8 344.6 L432.1 340.9Z" fill="#000080" shape-rendering="crispEdges"/><path d="M470.8 323.9 L474.4 327.6 L470.8 331.3 L467.1 327.6Z" fill="#000080" shape-rendering="crispEdges"/><path d="M505.7 315.7 L509.4 319.4 L505.7 323.1 L502.0 319.4Z" fill="#000080" shape-rendering="crispEdges"/><path d="M540.6 310.4 L544.3 314.1 L540.6 317.8 L536.9 314.1Z" fill="#000080" shape-rendering="crispEdges"/></svg>
<div class="ax th2" style="left:41px;top:446.0px;width:102px;text-align:right">0</div>
<div class="ax th2" style="left:41px;top:417.5px;width:102px;text-align:right">1,000,000</div>
<div class="ax th2" style="left:41px;top:389.0px;width:102px;text-align:right">2,000,000</div>
<div class="ax th2" style="left:41px;top:360.5px;width:102px;text-align:right">3,000,000</div>
<div class="ax th2" style="left:41px;top:332.0px;width:102px;text-align:right">4,000,000</div>
<div class="ax th2" style="left:41px;top:303.5px;width:102px;text-align:right">5,000,000</div>
<div class="ax th2" style="left:41px;top:275.0px;width:102px;text-align:right">6,000,000</div>
<div class="ax th2" style="left:116.0px;top:469px;width:80px;text-align:center">1880</div>
<div class="ax th2" style="left:185.8px;top:469px;width:80px;text-align:center">1900</div>
<div class="ax th2" style="left:255.7px;top:469px;width:80px;text-align:center">1920</div>
<div class="ax th2" style="left:325.5px;top:469px;width:80px;text-align:center">1940</div>
<div class="ax th2" style="left:395.3px;top:469px;width:80px;text-align:center">1960</div>
<div class="ax th2" style="left:465.2px;top:469px;width:80px;text-align:center">1980</div>
<div class="ax th2" style="left:535.0px;top:469px;width:80px;text-align:center">2000</div>
<!-- vertical scrollbar -->
<div class="a" style="left:761px;top:169px;width:15px;height:373px;background:#cedce3"></div>
<div class="a" style="left:761px;top:168px;width:16px;height:1px;background:#000"></div>
<div class="btn" style="left:761px;top:169px;width:15px;height:6px;border-right-color:#587e98;border-bottom-color:#000;box-shadow:none"></div>
<div class="btn" style="left:761px;top:175px;width:15px;height:16px;border-right-color:#587e98;box-shadow:none"></div>
<div class="btn" style="left:761px;top:191px;width:15px;height:176px;border-right-color:#587e98;border-bottom-color:#000;box-shadow:none"></div>
<div class="btn" style="left:761px;top:527px;width:15px;height:15px;border-right-color:#587e98;box-shadow:none"></div>
<!-- tab bar -->
<div class="a" style="left:31px;top:542px;width:1px;height:15px;background:#000"></div>
<div class="a" style="left:31px;top:558px;width:747px;height:1px;background:#cfe0e8"></div>
<div class="a" style="left:777px;top:168px;width:1px;height:390px;background:#cfe0e8"></div>
<div class="a" style="left:32px;top:542px;width:438px;height:15px;background:#9db9c8;border-top:1px solid #587e98"></div>
<div class="btn" style="left:32px;top:543px;width:15px;height:14px;border-right-color:#587e98;border-bottom-color:#587e98;box-shadow:none"></div>
<div class="btn" style="left:47px;top:543px;width:15px;height:14px;border-right-color:#587e98;border-bottom-color:#587e98;box-shadow:none"></div>
<div class="btn" style="left:62px;top:543px;width:15px;height:14px;border-right-color:#587e98;border-bottom-color:#587e98;box-shadow:none"></div>
<div class="btn" style="left:77px;top:543px;width:15px;height:14px;border-right-color:#587e98;border-bottom-color:#587e98;box-shadow:none"></div>
<!-- horizontal scrollbar -->
<div class="a" style="left:470px;top:542px;width:5px;height:15px;background:#9db9c8;border-left:1px solid #cfe0e8;border-right:1px solid #000"></div>
<div class="a" style="left:475px;top:542px;width:286px;height:15px;background:#cedce3"></div>
<div class="btn" style="left:475px;top:542px;width:16px;height:15px;border-right-color:#000;border-bottom-color:#587e98;box-shadow:none"></div>
<div class="btn" style="left:491px;top:542px;width:70px;height:15px;border-right-color:#000;border-bottom-color:#587e98;box-shadow:none"></div>
<div class="btn" style="left:741px;top:542px;width:14px;height:15px;border-right-color:#587e98;border-bottom-color:#587e98;box-shadow:none"></div>
<div class="a" style="left:755px;top:542px;width:6px;height:15px;background:#9db9c8;border-left:1px solid #000;box-shadow:inset 1px 0 0 #cfe0e8"></div>
<div class="a" style="left:761px;top:542px;width:16px;height:15px;background:#9db9c8;border-top:1px solid #000;border-left:1px solid #000"></div>
<svg class="a th" style="left:0;top:140px" width="800" height="436">
<g transform="translate(0,-140)">
<!-- scroll arrows -->
<path d="M765 185 H772 L768.5 181 Z" fill="#000"/>
<path d="M765 533 H772 L768.5 537 Z" fill="#000"/>
<path d="M484 546 V553 L480 549.5 Z" fill="#000"/>
<path d="M746 546 V553 L750 549.5 Z" fill="#000"/>
<!-- size grip -->
<path d="M776.5 546.5 L765.5 557.5 M776.5 550.5 L769.5 557.5 M776.5 554.5 L773.5 557.5" stroke="#cfe0e8" stroke-width="1.2"/>
<path d="M776.5 548 L767 557.5 M776.5 552 L771 557.5" stroke="#587e98" stroke-width="1.2"/>
<!-- tab nav -->
<rect x="34" y="546" width="2" height="9" fill="#000"/><path d="M41 546 V555 L36.5 550.5Z" fill="#000"/>
<path d="M56 546 V555 L51.5 550.5Z" fill="#000"/>
<path d="M66 546 V555 L70.5 550.5Z" fill="#000"/>
<path d="M81 546 V555 L85.5 550.5Z" fill="#000"/><rect x="87" y="546" width="2" height="9" fill="#000"/>
<!-- tabs -->
<path d="M194.5 542.5 L201.5 556.5 H245.5 L252.5 542.5" fill="#9db9c8" stroke="#000" stroke-width="1"/>
<path d="M144 542.5 L151 556.5 H194.5 L201.5 542.5" fill="#9db9c8" stroke="#000" stroke-width="1"/>
<path d="M92.5 542.5 L99.5 556.5 H143.5 L150.5 542.5" fill="#fff" stroke="#000" stroke-width="1"/>
<rect x="93" y="542" width="57" height="1" fill="#fff"/>
<rect x="32" y="557" width="438" height="1" fill="#cfe0e8"/>
<!-- doc icon -->
<path d="M35.5 149.5 H45 L47.5 152 V164.5 H35.5 Z" fill="#fff" stroke="#000"/>
<rect x="35" y="149" width="10" height="1" fill="#fff"/>
<path d="M38 157 H45 V163 H38 Z M38 160 H45" fill="none" stroke="#c0c0c0"/>
<path d="M33 151.5 L40 157.5 M40 151.5 L33 157.5" stroke="#000" stroke-width="3.2"/>
<path d="M33.5 152 L39.5 157 M39.5 152 L33.5 157" stroke="#00ffff" stroke-width="1.3"/>
<!-- doc title glyphs -->
<rect x="730" y="159" width="6" height="2" fill="#000"/>
<rect x="745.5" y="152.5" width="8" height="7" fill="none" stroke="#000"/><rect x="745" y="152" width="9" height="2" fill="#000"/>
<path d="M764.5 153 L772 160 M772 153 L764.5 160" stroke="#000" stroke-width="1.6"/>
</g>
</svg>
<div class="a th" style="left:101px;top:545px;font-size:11px;font-weight:bold">Sheet1</div>
<div class="a th" style="left:154px;top:545px;font-size:11px">Sheet2</div>
<div class="a th" style="left:206px;top:545px;font-size:11px">Sheet3</div>

</body></html>
